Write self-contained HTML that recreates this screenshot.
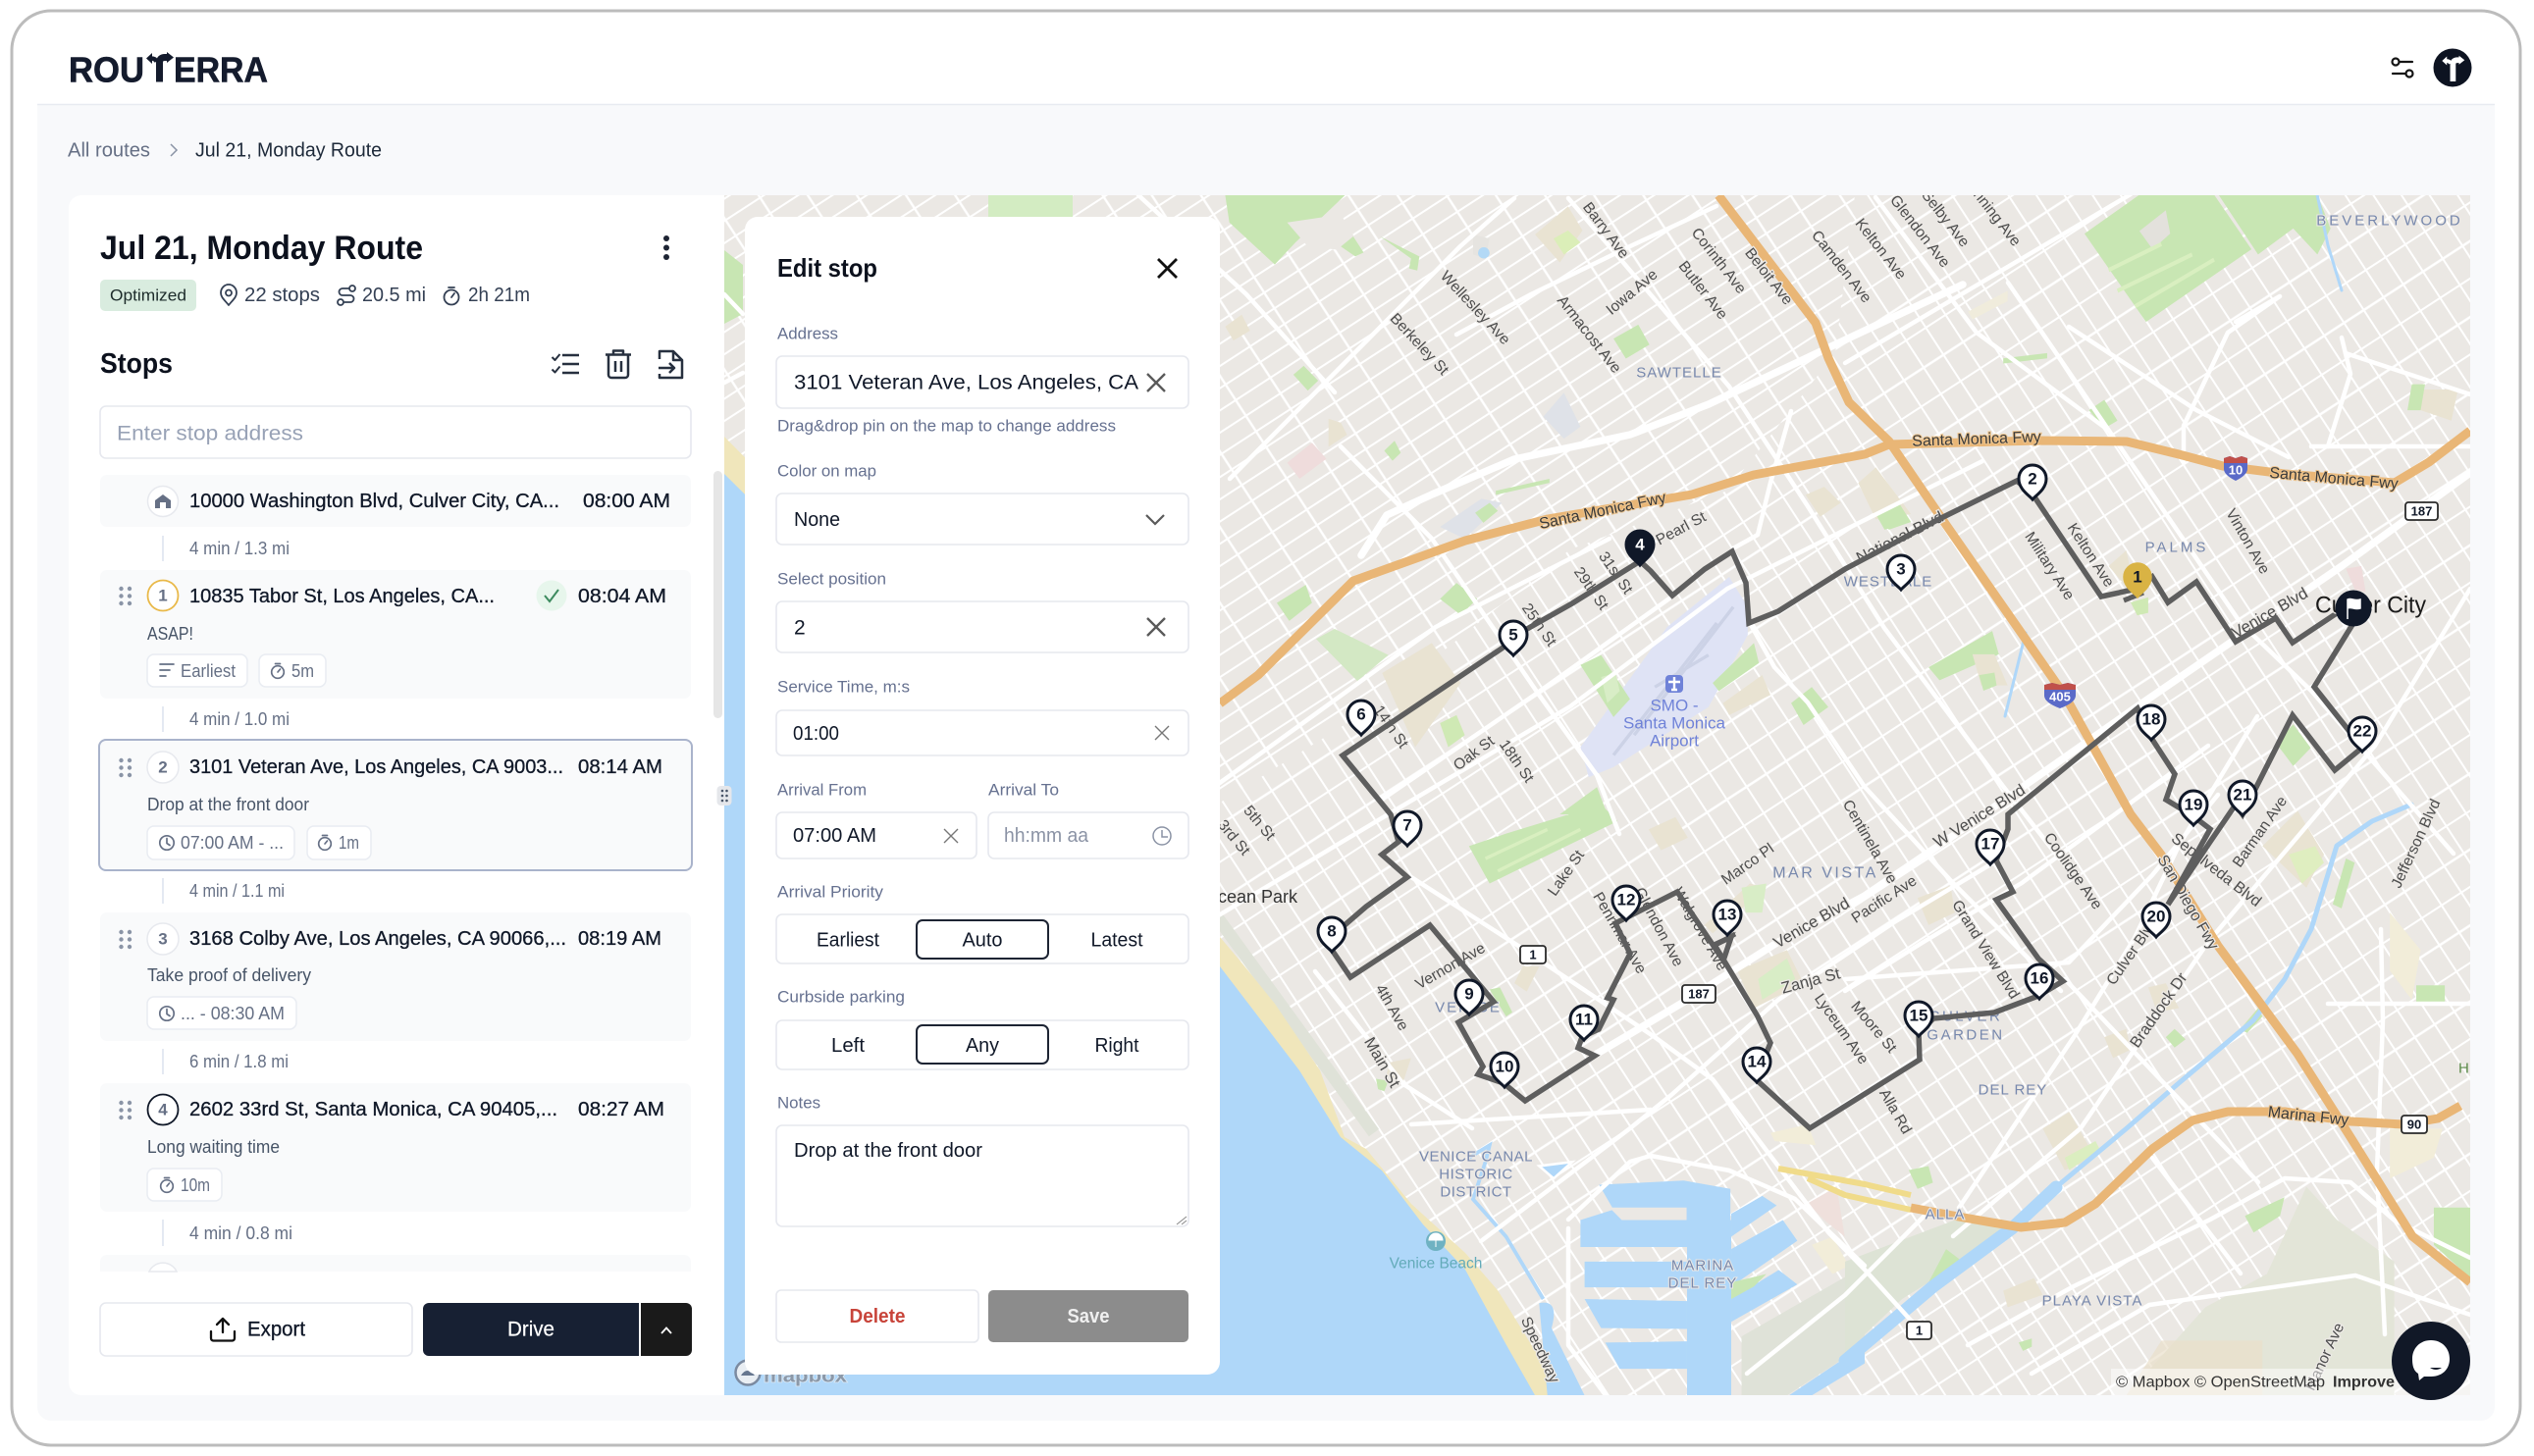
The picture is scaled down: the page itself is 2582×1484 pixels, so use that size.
<!DOCTYPE html>
<html lang="en">
<head>
<meta charset="utf-8">
<title>Routerra - Jul 21, Monday Route</title>
<style>
html,body{margin:0;padding:0;background:#fff;width:2582px;height:1484px;overflow:hidden}
svg{display:block;font-family:"Liberation Sans",sans-serif}
text{dominant-baseline:central}
.t{fill:#101828;font-size:20px;stroke:#101828;stroke-width:.3}
.g{fill:#667085;font-size:18px}
.n{fill:#475467;font-size:18px}
.l{fill:#667190;font-size:17px}
.v{fill:#101828;font-size:20px}
.c{text-anchor:middle}
.s{fill:#4d4d4d;font-size:15.5px;text-anchor:middle;stroke:#ece9e5;stroke-width:2.5px;paint-order:stroke}
.h{fill:#7788ad;font-size:15px;text-anchor:middle;letter-spacing:1px;stroke:#ece9e5;stroke-width:2px;paint-order:stroke}
.f{fill:#3a3a3a;font-size:16px;text-anchor:middle;stroke:#ecc48e;stroke-width:2px;paint-order:stroke}
.a{fill:#6f82d8;font-size:17px;text-anchor:middle}
.pn{font-size:17px;font-weight:bold;text-anchor:middle;fill:#101828}
.sh{fill:#101828;font-size:13px;font-weight:bold;text-anchor:middle}
.i{fill:none;stroke:#344054;stroke-width:1.8;stroke-linecap:round;stroke-linejoin:round}
.i2{fill:none;stroke:#667085;stroke-width:1.7;stroke-linecap:round;stroke-linejoin:round}
.box{fill:#fff;stroke:#e6e8ee;stroke-width:1.6}
.chip{fill:#fff;stroke:#e9ecf2;stroke-width:1.5}
.row{fill:#f9fafb}
.pk{fill:#c8e6b3}
.tn{fill:#e9e3d2}
.rd{fill:none;stroke:#fff;stroke-linecap:round;stroke-linejoin:round}
.fw{fill:none;stroke:#e9b676;stroke-width:9;stroke-linecap:butt;stroke-linejoin:round}
</style>
</head>
<body>
<svg xmlns="http://www.w3.org/2000/svg" width="2582" height="1484" viewBox="0 0 2582 1484">
<defs>
<clipPath id="mc"><rect x="738" y="199" width="1779" height="1223"/></clipPath>
<pattern id="ga" width="126" height="152" patternUnits="userSpaceOnUse" patternTransform="rotate(-33 1000 600)">
<g stroke="#fff" fill="none">
<path d="M0 10H126M0 48H126M0 86H126M0 124H126" stroke-width="2"/>
<path d="M0 29H126M0 67H126M0 105H126M0 143H126" stroke-width="2"/>
<path d="M20 0V152M62 0V152M104 0V152" stroke-width="2.4"/>
</g>
</pattern>
<pattern id="gb" width="96" height="130" patternUnits="userSpaceOnUse" patternTransform="rotate(-33 1000 600)">
<g stroke="#fff" fill="none">
<path d="M8 0V130M32 0V130M56 0V130M80 0V130" stroke-width="2"/>
<path d="M0 24H96M0 89H96" stroke-width="2.4"/>
<path d="M0 56H96M0 121H96" stroke-width="2"/>
</g>
</pattern>
<path id="pin" d="M0,21C-3,17 -14,11 -14,0A14,14 0 1 1 14,0C14,11 3,17 0,21Z"/>
</defs>

<!-- page frame -->
<rect x="12" y="11" width="2556" height="1462" rx="40" fill="#fff" stroke="#bcbcbc" stroke-width="3"/>
<path d="M38 107H2542V1434a14 14 0 0 1-14 14H52a14 14 0 0 1-14-14Z" fill="#f8f9fb"/>
<path d="M38 106.500H2542" stroke="#e8ebf1" stroke-width="1.500"/>

<!-- logo -->
<text x="70" y="71" font-size="36" font-weight="bold" fill="#141b2d" stroke="#141b2d" stroke-width=".6" textLength="77" lengthAdjust="spacingAndGlyphs">ROU</text>
<text x="177" y="71" font-size="36" font-weight="bold" fill="#141b2d" stroke="#141b2d" stroke-width=".6" textLength="96" lengthAdjust="spacingAndGlyphs">ERRA</text>
<g fill="none" stroke="#141b2d">
<path d="M162.500 83.500V64Q162.500 58.500 168 58.500H172" stroke-width="7"/>
<path d="M159.500 63Q158.500 59.500 154 59.500" stroke-width="4.500"/>
</g>
<path d="M170 53L177 58.500L170 64ZM155 54L149 59.500L155 65Z" fill="#141b2d"/>

<!-- header right -->
<g fill="none" stroke="#141414" stroke-width="2.200" stroke-linecap="round">
<circle cx="2441" cy="63" r="3.500"/><path d="M2445 63H2458"/>
<circle cx="2455" cy="75" r="3.500"/><path d="M2438 75H2451"/>
</g>
<circle cx="2499" cy="69" r="19.500" fill="#0d1321"/>
<g transform="translate(2499 69) scale(.82) translate(-162 -68)">
<g fill="none" stroke="#fff">
<path d="M162.500 85V64Q162.500 58.500 168 58.500H172" stroke-width="7"/>
<path d="M159.500 63Q158.500 59.500 154 59.500" stroke-width="4.500"/>
</g>
<path d="M170 53L177 58.500L170 64ZM155 54L149 59.500L155 65Z" fill="#fff"/>
</g>

<!-- breadcrumb -->
<text x="69" y="153.500" font-size="20" fill="#667085" textLength="84" lengthAdjust="spacingAndGlyphs">All routes</text>
<path d="M174 147L180 153L174 159" fill="none" stroke="#8a93a5" stroke-width="1.500"/>
<text x="199" y="153.500" font-size="20" fill="#1d2939" textLength="190" lengthAdjust="spacingAndGlyphs">Jul 21, Monday Route</text>

<!-- left panel -->
<rect x="70" y="199" width="700" height="1223" rx="13" fill="#fff"/>
<text x="102" y="253" font-size="34" font-weight="bold" fill="#0c111d" textLength="329" lengthAdjust="spacingAndGlyphs">Jul 21, Monday Route</text>
<g fill="#1d2433"><circle cx="679" cy="243" r="3"/><circle cx="679" cy="252.500" r="3"/><circle cx="679" cy="262" r="3"/></g>

<rect x="102" y="285" width="98" height="32" rx="5" fill="#d9ecdf"/>
<text x="112" y="301" font-size="17" fill="#1c2b2a" textLength="78" lengthAdjust="spacingAndGlyphs">Optimized</text>
<path class="i" d="M233 311C229 306 225 303 225 298.500A8 8.500 0 0 1 241 298.500C241 303 237 306 233 311Z"/><circle class="i" cx="233" cy="298.500" r="3"/>
<text x="249" y="301" font-size="20" fill="#344054" textLength="77" lengthAdjust="spacingAndGlyphs">22 stops</text>
<g class="i"><circle cx="359" cy="294" r="3"/><circle cx="347" cy="308" r="3"/><path d="M355.500 294H349a3.500 3.500 0 0 0 0 7H357a3.500 3.500 0 0 1 0 7H351"/></g>
<text x="369" y="301" font-size="20" fill="#344054" textLength="65" lengthAdjust="spacingAndGlyphs">20.5 mi</text>
<g class="i"><circle cx="460" cy="303" r="7.500"/><path d="M457 293H463M460 303L463 299"/></g>
<text x="477" y="301" font-size="20" fill="#344054" textLength="63" lengthAdjust="spacingAndGlyphs">2h 21m</text>

<text x="102" y="371" font-size="29" font-weight="bold" fill="#0c111d" textLength="74" lengthAdjust="spacingAndGlyphs">Stops</text>
<g fill="none" stroke="#27303f" stroke-width="2.500" stroke-linejoin="round">
<path d="M573 362H590M573 371H590M573 380H590"/>
<path d="M562.500 364L565.500 367L570.500 361M562.500 376.500L565.500 379.500L570.500 373.500" stroke-width="2"/>
<path d="M617 361.500H643M625 361V357.500H635V361M620 362V382a3 3 0 0 0 3 3H637a3 3 0 0 0 3-3V362M627 368V379M633 368V379"/>
<path d="M672 366V358H686L695 367V385H672V381M686 358V367H695M671 375H686M682 370L687 375L682 380"/>
</g>

<rect class="box" x="102" y="414" width="602" height="53" rx="6"/>
<text x="119" y="442" font-size="21" fill="#98a2b6" textLength="190" lengthAdjust="spacingAndGlyphs">Enter stop address</text>

<!-- scrollbar -->
<rect x="727" y="480" width="9" height="252" rx="4.500" fill="#e6e6e6"/>

<!-- home row -->
<rect class="row" x="102" y="484" width="602" height="53" rx="7"/>
<ellipse cx="166" cy="511" rx="15.500" ry="15.500" fill="#fff" stroke="#e7e9ee" stroke-width="1.500"/>
<path d="M166 504L174 510V518H169V512H163V518H158V510Z" fill="#667085"/>
<text class="t" x="193" y="511" textLength="377" lengthAdjust="spacingAndGlyphs">10000 Washington Blvd, Culver City, CA...</text>
<text class="t" x="594" y="511" textLength="89" lengthAdjust="spacingAndGlyphs">08:00 AM</text>

<path d="M166 546V572M166 720V746M166 895V921M166 1069V1095M166 1243V1270" stroke="#e4e9f2" stroke-width="2"/>
<text class="g" x="193" y="559" textLength="102" lengthAdjust="spacingAndGlyphs">4 min / 1.3 mi</text>
<text class="g" x="193" y="733" textLength="102" lengthAdjust="spacingAndGlyphs">4 min / 1.0 mi</text>
<text class="g" x="193" y="908" textLength="97" lengthAdjust="spacingAndGlyphs">4 min / 1.1 mi</text>
<text class="g" x="193" y="1082" textLength="101" lengthAdjust="spacingAndGlyphs">6 min / 1.8 mi</text>
<text class="g" x="193" y="1257" textLength="105" lengthAdjust="spacingAndGlyphs">4 min / 0.8 mi</text>

<!-- row 1 -->
<rect class="row" x="102" y="581" width="602" height="131" rx="7"/>
<g fill="#8a94a6"><circle cx="123.500" cy="600" r="2.200"/><circle cx="132" cy="600" r="2.200"/><circle cx="123.500" cy="607.500" r="2.200"/><circle cx="132" cy="607.500" r="2.200"/><circle cx="123.500" cy="615" r="2.200"/><circle cx="132" cy="615" r="2.200"/></g>
<circle cx="166" cy="607" r="15.500" fill="#fff" stroke="#e9b949" stroke-width="1.800"/>
<text x="166" y="607" font-size="17" font-weight="bold" fill="#667085" text-anchor="middle">1</text>
<text class="t" x="193" y="608" textLength="311" lengthAdjust="spacingAndGlyphs">10835 Tabor St, Los Angeles, CA...</text>
<circle cx="562" cy="607" r="15.500" fill="#e7f6ec"/>
<path d="M555 607L560 613L569 601" fill="none" stroke="#3d8b5f" stroke-width="2"/>
<text class="t" x="589" y="608" textLength="90" lengthAdjust="spacingAndGlyphs">08:04 AM</text>
<text class="n" x="150" y="646" textLength="47" lengthAdjust="spacingAndGlyphs">ASAP!</text>
<rect class="chip" x="150" y="667" width="102" height="33" rx="7"/>
<path class="i2" d="M163 677H177M163 683H173M163 689H169"/>
<text class="g" x="184" y="684" textLength="56" lengthAdjust="spacingAndGlyphs">Earliest</text>
<rect class="chip" x="264" y="667" width="68" height="33" rx="7"/>
<g class="i2"><circle cx="283" cy="685" r="6.300"/><path d="M280.500 676.500H285.500M283 685L285.500 682"/></g>
<text class="g" x="297" y="684" textLength="23" lengthAdjust="spacingAndGlyphs">5m</text>

<!-- row 2 selected -->
<rect x="101" y="754" width="604" height="133" rx="7" fill="#f9fafb" stroke="#a9b3cb" stroke-width="2"/>
<g fill="#8a94a6"><circle cx="123.500" cy="775" r="2.200"/><circle cx="132" cy="775" r="2.200"/><circle cx="123.500" cy="782.500" r="2.200"/><circle cx="132" cy="782.500" r="2.200"/><circle cx="123.500" cy="790" r="2.200"/><circle cx="132" cy="790" r="2.200"/></g>
<circle cx="166" cy="782" r="16" fill="#fff" stroke="#e7e9ee" stroke-width="1.500"/>
<text x="166" y="782" font-size="17" font-weight="bold" fill="#667085" text-anchor="middle">2</text>
<text class="t" x="193" y="782" textLength="381" lengthAdjust="spacingAndGlyphs">3101 Veteran Ave, Los Angeles, CA 9003...</text>
<text class="t" x="589" y="782" textLength="86" lengthAdjust="spacingAndGlyphs">08:14 AM</text>
<text class="n" x="150" y="820" textLength="165" lengthAdjust="spacingAndGlyphs">Drop at the front door</text>
<rect class="chip" x="150" y="842" width="150" height="34" rx="7"/>
<g class="i2"><circle cx="170" cy="859" r="7.200"/><path d="M170 854.500V859.500L173 861.500"/></g>
<text class="g" x="184" y="859" textLength="105" lengthAdjust="spacingAndGlyphs">07:00 AM - ...</text>
<rect class="chip" x="313" y="842" width="65" height="34" rx="7"/>
<g class="i2"><circle cx="331" cy="860" r="6.300"/><path d="M328.500 851.500H333.500M331 860L333.500 857"/></g>
<text class="g" x="345" y="859" textLength="21" lengthAdjust="spacingAndGlyphs">1m</text>

<!-- row 3 -->
<rect class="row" x="102" y="930" width="602" height="131" rx="7"/>
<g fill="#8a94a6"><circle cx="123.500" cy="950" r="2.200"/><circle cx="132" cy="950" r="2.200"/><circle cx="123.500" cy="957.500" r="2.200"/><circle cx="132" cy="957.500" r="2.200"/><circle cx="123.500" cy="965" r="2.200"/><circle cx="132" cy="965" r="2.200"/></g>
<circle cx="166" cy="957" r="16" fill="#fff" stroke="#e7e9ee" stroke-width="1.500"/>
<text x="166" y="957" font-size="17" font-weight="bold" fill="#667085" text-anchor="middle">3</text>
<text class="t" x="193" y="957" textLength="384" lengthAdjust="spacingAndGlyphs">3168 Colby Ave, Los Angeles, CA 90066,...</text>
<text class="t" x="589" y="957" textLength="85" lengthAdjust="spacingAndGlyphs">08:19 AM</text>
<text class="n" x="150" y="994" textLength="167" lengthAdjust="spacingAndGlyphs">Take proof of delivery</text>
<rect class="chip" x="150" y="1016" width="152" height="33" rx="7"/>
<g class="i2"><circle cx="170" cy="1033" r="7.200"/><path d="M170 1028.500V1033.500L173 1035.500"/></g>
<text class="g" x="184" y="1033" textLength="106" lengthAdjust="spacingAndGlyphs">... - 08:30 AM</text>

<!-- row 4 -->
<rect class="row" x="102" y="1104" width="602" height="131" rx="7"/>
<g fill="#8a94a6"><circle cx="123.500" cy="1124" r="2.200"/><circle cx="132" cy="1124" r="2.200"/><circle cx="123.500" cy="1131.500" r="2.200"/><circle cx="132" cy="1131.500" r="2.200"/><circle cx="123.500" cy="1139" r="2.200"/><circle cx="132" cy="1139" r="2.200"/></g>
<circle cx="166" cy="1131" r="15.500" fill="#fff" stroke="#101828" stroke-width="1.800"/>
<text x="166" y="1131" font-size="17" font-weight="bold" fill="#667085" text-anchor="middle">4</text>
<text class="t" x="193" y="1131" textLength="375" lengthAdjust="spacingAndGlyphs">2602 33rd St, Santa Monica, CA 90405,...</text>
<text class="t" x="589" y="1131" textLength="88" lengthAdjust="spacingAndGlyphs">08:27 AM</text>
<text class="n" x="150" y="1169" textLength="135" lengthAdjust="spacingAndGlyphs">Long waiting time</text>
<rect class="chip" x="150" y="1191" width="76" height="33" rx="7"/>
<g class="i2"><circle cx="170" cy="1209" r="6.300"/><path d="M167.500 1200.500H172.500M170 1209L172.500 1206"/></g>
<text class="g" x="184" y="1208" textLength="30" lengthAdjust="spacingAndGlyphs">10m</text>

<!-- row 5 clipped -->
<path class="row" d="M102 1296V1286a7 7 0 0 1 7-7H697a7 7 0 0 1 7 7V1296Z"/>
<path d="M152 1296A15.500 15.500 0 0 1 180 1296Z" fill="#fff" stroke="#e7e9ee" stroke-width="1.500"/>

<!-- bottom buttons -->
<rect class="box" x="102" y="1328" width="318" height="54" rx="6"/>
<path d="M215 1357V1364a2.500 2.500 0 0 0 2.500 2.500H236.500a2.500 2.500 0 0 0 2.500-2.500V1357M227 1358V1344.500M221 1350L227 1344L233 1350" fill="none" stroke="#111" stroke-width="2.300" stroke-linecap="round" stroke-linejoin="round"/>
<text x="252" y="1355" font-size="21" fill="#101828" stroke="#101828" stroke-width=".3" textLength="59" lengthAdjust="spacingAndGlyphs">Export</text>
<path d="M437 1328H651V1382H437a6 6 0 0 1-6-6V1334a6 6 0 0 1 6-6Z" fill="#172033"/>
<path d="M653 1328H699a6 6 0 0 1 6 6V1376a6 6 0 0 1-6 6H653Z" fill="#1a1a1a"/>
<text x="517" y="1355" font-size="21" fill="#fff" stroke="#fff" stroke-width=".2" textLength="48" lengthAdjust="spacingAndGlyphs">Drive</text>
<path d="M674 1359L679 1353.500L684 1359" fill="none" stroke="#fff" stroke-width="1.800"/>

<!-- MAP -->
<g clip-path="url(#mc)">
<rect x="738" y="199" width="1779" height="1223" fill="#ebe8e4"/>
<rect x="738" y="199" width="1779" height="1223" fill="url(#gb)"/>
<path d="M738 199H1890L1870 360L1760 500L1600 560L1400 720L1240 820H738Z" fill="#ebe8e4"/>
<path d="M738 199H1890L1870 360L1760 500L1600 560L1400 720L1240 820H738Z" fill="url(#ga)"/>

<!-- zoom6 quadrant fills -->
<g transform="translate(1240 190) scale(.4209 .4082)">
<polygon class="pk" points="20,22 310,22 190,140 140,195 30,90"/>
<polygon points="170,90 300,70 355,165 220,150" fill="#ebe8e4"/>
<polygon class="pk" points="300,150 330,125 355,165 335,175"/>
<polygon class="pk" points="395,125 490,175 485,210 465,205 470,180"/>
<polygon class="pk" points="960,380 1020,345 1047,395 990,430"/>
<polygon class="pk" points="185,470 210,448 245,485 220,510"/>
<polygon class="pk" points="405,660 430,635 445,665 425,685"/>
<polygon class="pk" points="145,1040 215,995 230,1040 175,1085"/>
<polygon points="240,1130 285,1105 415,1170 340,1235" fill="#d3e8c4"/>
<polygon class="pk" points="540,1030 580,990 630,1030 590,1070"/>
<polygon class="tn" points="770,120 850,50 885,110 830,190"/>
<polygon points="815,130 850,110 880,140 840,170" fill="#dbeeb8"/>
<polygon class="tn" points="400,1215 520,1140 590,1240 480,1400"/>
<polygon points="540,1340 580,1320 600,1370 560,1400" fill="#cfe9b4"/>
<polygon points="790,575 840,515 880,600 840,630" fill="#dfe2e8"/>
<polygon points="540,850 640,780 690,790 600,880" fill="#dfe2e8"/>
<polygon points="170,690 230,640 265,680 200,730" fill="#efdcdc"/>
<polygon points="20,350 60,320 80,360 40,385" fill="#e9e3d2"/>
<polygon points="270,580 300,590 315,620 270,650" fill="#e9e3d2"/>
<polygon points="620,120 660,130 650,180 620,170" fill="#e6e4e0"/>
<ellipse cx="646" cy="166" rx="14" ry="14" fill="#b3d9f6"/>
<!-- airport -->
<polygon points="880,1400 1090,1100 1240,975 1285,1050 1285,1120 1190,1300 960,1450 900,1475" fill="#dfe3f5"/>
<path d="M960 1420L1210 1090M1010 1370L1250 1050M1060 1250L1190 1170" stroke="#ccd2e6" stroke-width="8" fill="none"/>
<polygon class="pk" points="880,1195 930,1170 1000,1280 960,1325"/>
<polygon points="930,1225 965,1215 975,1260 945,1290" fill="#d8edc6"/>
<polygon class="pk" points="1200,1240 1300,1140 1312,1190 1215,1260"/>
<polygon class="tn" points="1225,1290 1320,1220 1340,1270 1240,1320"/>
<polygon class="pk" points="1390,1290 1440,1250 1480,1300 1420,1345"/>
<polygon class="pk" points="830,1568 920,1500 945,1568"/>
<polygon class="tn" points="1425,770 1470,750 1510,790 1460,825"/>
<polygon class="pk" points="675,760 805,730 805,740 675,770"/>
<polygon class="pk" points="625,815 660,790 680,810 645,840"/>
</g>

<!-- zoom7 quadrant fills -->
<g transform="translate(1880 0) scale(.4477 .5293)">
<polygon class="pk" points="545,450 670,375 840,375 925,480 685,620"/>
<polygon class="pk" points="850,375 1075,375 1105,440 1075,490 1020,440 940,490"/>
<polygon points="670,445 730,405 740,450 700,480" fill="#e3e1dc"/>
<path d="M600 520L720 470M620 560L790 490M660 590L840 500" stroke="#d9efc0" stroke-width="8" fill="none"/>
<polygon class="pk" points="70,995 110,960 150,1005 100,1020"/>
<polygon class="tn" points="30,930 70,900 150,990 70,1000"/>
<polygon class="pk" points="70,990 120,965 150,1005 90,1020"/>
<polygon class="pk" points="190,1285 335,1215 350,1260 215,1310"/>
<polygon class="pk" points="555,790 590,770 620,810 590,825"/>
<polygon points="650,1160 690,1150 690,1180 665,1185" fill="#cfe9b4"/>
<polygon class="pk" points="980,1430 1020,1395 1060,1440 1020,1475"/>
<polygon class="tn" points="1310,750 1395,750 1380,810 1310,790"/>
<polygon class="pk" points="1290,740 1320,740 1310,790 1280,790"/>
<polygon class="tn" points="600,1090 640,1060 650,1100 640,1130"/>
<polygon class="tn" points="290,1260 340,1260 370,1320 310,1320"/>
<polygon class="pk" points="305,1300 340,1295 345,1320 315,1330"/>
<polygon points="1140,1095 1175,1090 1185,1140 1160,1135" fill="#efdcdc"/>
<polygon class="pk" points="360,690 460,680 460,690 360,700"/>
<polygon points="280,600 370,560 370,580 290,615" fill="#f0ecdc"/>
</g>

<!-- zoom8 quadrant fills -->
<g transform="translate(1240 820) scale(.4209 .4235)">
<polygon class="pk" points="610,100 700,70 930,0 970,40 660,190"/>
<path d="M650 130L800 60M680 160L880 60" stroke="#d9efc0" stroke-width="8" fill="none"/>
<polygon class="tn" points="740,390 780,390 750,450 720,430"/>
<polygon class="pk" points="660,445 685,440 715,500 700,510"/>
<polygon class="tn" points="1200,310 1330,200 1290,190 1180,290"/>
<polygon points="1270,200 1330,190 1320,260 1280,260" fill="#d8edc6"/>
<polygon class="tn" points="1260,400 1380,350 1420,430 1300,490"/>
<polygon points="1310,420 1380,370 1400,420 1320,470" fill="#d8edc6"/>
<polygon class="tn" points="1045,60 1110,30 1140,80 1075,110"/>
<polygon class="tn" points="420,620 470,610 450,670 410,650"/>
<polygon class="pk" points="385,660 415,665 405,690 390,685"/>
<polygon points="1270,1280 1568,1110 1568,1300 1380,1422 1270,1422" fill="#dfe2d8"/>
<polygon points="1430,960 1500,920 1520,1040 1470,1000" fill="#efe0dc"/>
<polygon points="1440,1060 1490,1040 1530,1110 1490,1130" fill="#f2edd9"/>
<polygon points="1340,790 1430,770 1450,820 1350,810" fill="#f2edd9"/>
<path d="M0 270L380 790" stroke="#dfe2d8" stroke-width="30" fill="none"/>
</g>

<!-- zoom9 quadrant fills -->
<g transform="translate(1880 820) scale(.4477 .4235)">
<polygon points="640,1422 820,1210 960,1130 1050,920 1120,1000 1250,1100 1250,1422" fill="#e3e5d8"/>
<polygon points="0,1100 250,1000 400,1010 130,1190 0,1320" fill="#dde3d5"/>
<polygon class="tn" points="950,100 1030,15 1090,120 1050,200"/>
<polygon points="1010,120 1070,100 1090,140 1040,190" fill="#dfeec0"/>
<polygon class="tn" points="165,225 240,195 250,260 190,290"/>
<polygon class="tn" points="450,780 510,740 570,850 500,880"/>
<polygon points="500,850 570,810 580,830 510,880" fill="#dbeec0"/>
<polygon points="1240,780 1360,780 1340,850 1240,900" fill="#f2edd9"/>
<polygon points="1240,260 1310,350 1290,470 1240,400" fill="#f2edd9"/>
<polygon class="tn" points="360,1170 430,1140 450,1180 370,1210"/>
<polygon class="tn" points="590,560 640,540 650,590 610,610"/>
<polygon class="tn" points="690,440 730,430 760,490 710,500"/>
<polygon class="pk" points="1300,435 1365,435 1365,475 1300,475"/>
<polygon class="pk" points="1110,240 1140,130 1160,140 1130,250"/>
<polygon class="pk" points="900,540 940,490 950,510 915,550"/>
<polygon class="pk" points="145,880 190,870 200,910 165,925"/>
<polygon class="pk" points="180,1170 230,1070 280,1110 190,1180"/>
<polygon class="pk" points="910,990 1000,945 990,990 930,1030"/>
<polygon class="pk" points="1340,970 1424,970 1424,1140 1340,1060"/>
<polygon class="pk" points="730,560 750,540 775,565 750,585"/>
<polygon class="pk" points="395,1295 425,1285 425,1305 405,1315"/>
<polygon points="720,1290 950,1290 950,1422 640,1422" fill="#e9dfca" opacity=".7"/>
</g>

<!-- left strip hill -->
<polygon points="738,255 757,270 757,320 738,330" fill="#c8e6b3"/>
<polygon points="1007,199 1093,199 1093,221 1007,221" fill="#d3ecc2"/>

<!-- beach + ocean -->
<polygon points="738,445 1243,955 1265,981 1299,1023 1345,1091 1370,1159 1392,1171 1438,1227 1493,1277 1526,1315 1568,1383 1594,1422 738,1422" fill="#f0e6bb"/>
<polygon points="738,483 1243,985 1282,1036 1324,1091 1366,1159 1408,1193 1450,1248 1493,1294 1535,1371 1564,1422 738,1422" fill="#afd7f9"/>

<!-- marina -->
<g transform="translate(1240 820) scale(.4209 .4235)" fill="#afd7f9">
<polygon points="925,915 1130,905 1243,925 1243,1065 880,1065 880,1000 960,975"/>
<polygon points="950,970 1137,970 1137,1000 980,1000" fill="#ebe8e4"/>
<rect x="890" y="1100" width="248" height="62"/>
<polygon points="890,1190 1138,1195 1138,1262 930,1260"/>
<polygon points="940,1295 1138,1292 1138,1358 975,1358"/>
<rect x="1138" y="1000" width="107" height="422"/>
<polygon points="1245,985 1320,942 1355,965 1245,1040"/>
<polygon points="1245,1070 1370,1000 1405,1050 1245,1160"/>
<polygon points="1245,1190 1360,1120 1405,1155 1245,1245"/>
<polygon points="1245,1150 1330,1130 1300,1160 1245,1190" fill="#c8e6b3"/>
<path d="M780 870L860 860L815 900Z" fill="#afd7f9" stroke="#fff" stroke-width="6"/>
<path d="M780 1200Q830 1190 810 1260L890 1422H800Z"/>
<path d="M1385 1422L1568 1300V1345L1440 1422Z"/>
<path d="M610 850L660 820L650 860L620 950L700 1040L790 1190" fill="none" stroke="#afd7f9" stroke-width="9"/>
</g>

<!-- creek -->
<g fill="none" stroke="#afd7f9" stroke-linejoin="round" stroke-linecap="round">
<path d="M1880 1387L1970 1311L2050 1252L2095 1210" stroke-width="13"/>
<path d="M2095 1210L2167 1150L2220 1104L2296 1040L2328 998L2355 947L2381 862L2417 837L2457 820" stroke-width="5"/>
<path d="M2361 198L2372 250L2386 296" stroke-width="3"/>
<path d="M2064 645L2043 730" stroke-width="3"/>
</g>

<!-- major roads -->
<g class="rd" stroke-width="4.500">
<path d="M1253 488L1488 251L1543 202"/>
<path d="M1484 341L1560 300L1661 251L1749 210"/>
<path d="M1825 419L1804 492L1791 545L1766 559"/>
<path d="M1701 610L1606 678L1564 708L1408 815"/>
<path d="M1783 635L1808 680L1842 716L1900 802L1990 900L2100 1010"/>
<path d="M1640 549L1463 639L1333 733L1240 800"/>
<path d="M1366 455L1459 549L1568 708L1627 790L1650 850"/>
<path d="M1598 202L1762 394L1842 516L1920 640L2040 800L2110 890"/>
<path d="M1438 894L1547 964L1686 1057L1745 1100L1863 1256L1900 1294L1960 1360"/>
<path d="M1240 934L1396 841L1600 720L1760 600L1900 530L2020 470"/>
<path d="M1598 1243L1661 1184L1682 1178L1762 1193L1829 1222L1900 1290"/>
<path d="M1509 1265L1661 1150L1703 1116L1812 1019L1930 940L2030 880"/>
<path d="M1438 1146L1682 1131M1500 1150L1430 1105L1340 990"/>
<path d="M1598 1252L1598 1371L1636 1422"/>
<path d="M1880 998L2108 981L2193 892L2260 810"/>
<path d="M1996 1231L2113 1057L2175 956L2220 862L2300 730"/>
<path d="M2005 1371L2113 1311L2252 1243L2328 1201L2395 1205L2440 1244L2517 1282"/>
<path d="M2193 1180L2283 1298"/>
<path d="M2426 947L2428 1040L2422 1193L2430 1360"/>
<path d="M2372 1023L2517 1023"/>
<path d="M2104 998L2301 1205"/>
<path d="M1880 370L2171 198"/>
<path d="M2108 333L2238 418L2332 466"/>
<path d="M1911 201L2014 339L2149 439"/>
<path d="M2046 288L2149 439L2283 635L2355 704L2500 870"/>
<path d="M2278 328L2323 302L2270 339L2225 434L2225 471"/>
<path d="M2386 344L2395 381L2372 455"/>
<path d="M2390 360L2517 402"/>
<path d="M2355 455L2517 455"/>
<path d="M2070 1400L2190 1330L2400 1300L2517 1340"/>
<path d="M2250 760L2060 900L1960 960L1880 1010"/>
<path d="M2517 600L2420 760L2250 960L2120 1150L1990 1260"/>
<path d="M1960 1240L1880 1320L1780 1400"/>
<path d="M1160 199L1270 300L1360 400"/>
<path d="M738 300L757 320M738 390L757 380"/>
</g>
<g class="rd" stroke-width="7.500">
<path d="M1387 566L1413 525L1459 504L1543 468L1661 443L1741 412L1900 337L2000 290"/>
<path d="M1627 1074L1716 1021L1812 960L1900 913L1987 854L2175 722L2386 577L2517 482"/>
</g>

<!-- freeways -->
<path d="M1812 1191L1900 1207L1947 1218M1842 1201L1880 1218L1947 1233" fill="none" stroke="#f0db8a" stroke-width="6"/>
<path class="fw" d="M1751 199L1850 329L1863 365L1884 410L1925 450L1983 535L2104 709L2171 830L2202 871L2260 964L2341 1074L2395 1159L2458 1260L2517 1307" stroke-width="10"/>
<path class="fw" d="M1243 717L1282 688L1379 592L1493 551L1577 529L1724 504L1787 484L1900 463L1925 453L2077 449L2167 450L2220 463L2265 475L2328 483L2440 492L2475 471L2517 439"/>
<path class="fw" d="M1947 1231L2001 1241L2059 1251L2104 1246L2135 1227L2193 1171L2234 1142L2270 1133L2328 1133L2395 1143L2449 1146L2484 1140L2507 1127" stroke-width="9.500"/>

<!-- street labels -->
<text class="s" transform="translate(1636 235) rotate(53)">Barry Ave</text>
<text class="s" transform="translate(1503 314) rotate(47)">Wellesley Ave</text>
<text class="s" transform="translate(1446 351) rotate(47)">Berkeley St</text>
<text class="s" transform="translate(1619 341) rotate(52)">Armacost Ave</text>
<text class="s" transform="translate(1663 298) rotate(-40)">Iowa Ave</text>
<text class="s" transform="translate(1735 296) rotate(52)">Butler Ave</text>
<text class="s" transform="translate(1751 266) rotate(52)">Corinth Ave</text>
<text class="s" transform="translate(1802 282) rotate(52)">Beloit Ave</text>
<text class="s" transform="translate(1876 272) rotate(52)">Camden Ave</text>
<text class="s" transform="translate(1916 254) rotate(52)">Kelton Ave</text>
<text class="s" transform="translate(1956 236) rotate(52)">Glendon Ave</text>
<text class="s" transform="translate(1982 223) rotate(52)">Selby Ave</text>
<text class="s" transform="translate(2028 214) rotate(52)">Manning Ave</text>
<text class="s" transform="translate(1713 539) rotate(-28)">Pearl St</text>
<text class="s" transform="translate(1646 584) rotate(55)">31st St</text>
<text class="s" transform="translate(1621 600) rotate(55)">29th St</text>
<text class="s" transform="translate(1568 637) rotate(55)">25th St</text>
<text class="s" transform="translate(1417 741) rotate(55)">14th St</text>
<text class="s" transform="translate(1502 768) rotate(-37)">Oak St</text>
<text class="s" transform="translate(1545 776) rotate(55)">18th St</text>
<text class="s" transform="translate(1283 839) rotate(50)">5th St</text>
<text class="s" transform="translate(1257 854) rotate(50)">3rd St</text>
<text class="s" transform="translate(1596 890) rotate(-55)">Lake St</text>
<text class="s" transform="translate(1781 881) rotate(-35)">Marco Pl</text>
<text class="s" style="font-size:16.500px" transform="translate(1846 941) rotate(-30)">Venice Blvd</text>
<text class="s" transform="translate(1732 947) rotate(60)">Walgrove Ave</text>
<text class="s" transform="translate(1650 951) rotate(60)">Pennmar Ave</text>
<text class="s" transform="translate(1690 945) rotate(62)">Glendon Ave</text>
<text class="s" transform="translate(1478 985) rotate(-30)">Vernon Ave</text>
<text class="s" transform="translate(1418 1027) rotate(60)">4th Ave</text>
<text class="s" style="font-size:16.500px" transform="translate(1408 1083) rotate(60)">Main St</text>
<text class="s" style="font-size:16.500px" transform="translate(1845 1000) rotate(-15)">Zanja St</text>
<text class="s" transform="translate(1876 1049) rotate(55)">Lyceum Ave</text>
<text class="s" transform="translate(1909 1047) rotate(50)">Moore St</text>
<text class="s" transform="translate(1569 1376) rotate(65)">Speedway</text>
<text class="s" transform="translate(1905 858) rotate(60)">Centinela Ave</text>
<text class="s" style="font-size:16.500px" transform="translate(2017 832) rotate(-32)">W Venice Blvd</text>
<text class="s" transform="translate(1920 917) rotate(-33)">Pacific Ave</text>
<text class="s" transform="translate(2112 888) rotate(55)">Coolidge Ave</text>
<text class="s" transform="translate(2023 968) rotate(58)">Grand View Blvd</text>
<text class="s" transform="translate(2173 970) rotate(-55)">Culver Blvd</text>
<text class="s" transform="translate(1931 1133) rotate(60)">Alla Rd</text>
<text class="s" style="font-size:16px" transform="translate(2258 887) rotate(38)">Sepulveda Blvd</text>
<text class="s" style="font-size:16px" transform="translate(2229 920) rotate(60)">San Diego Fwy</text>
<text class="s" transform="translate(2303 848) rotate(-55)">Barman Ave</text>
<text class="s" transform="translate(2462 860) rotate(-65)">Jefferson Blvd</text>
<text class="s" style="font-size:16px" transform="translate(2200 1030) rotate(-55)">Braddock Dr</text>
<text class="s" transform="translate(2369 1383) rotate(-65)">Manor Ave</text>
<text class="s" transform="translate(2088 577) rotate(57)">Military Ave</text>
<text class="s" transform="translate(2130 566) rotate(57)">Kelton Ave</text>
<text class="s" transform="translate(2290 552) rotate(60)">Vinton Ave</text>
<text class="s" style="font-size:16.500px" transform="translate(1936 548) rotate(-27)">National Blvd</text>
<text class="s" style="font-size:16.500px" transform="translate(2313 625) rotate(-30)">Venice Blvd</text>

<text class="f" transform="translate(1633 521) rotate(-12)">Santa Monica Fwy</text>
<text class="f" transform="translate(2014 448) rotate(-2)">Santa Monica Fwy</text>
<text class="f" transform="translate(2378 488) rotate(5)">Santa Monica Fwy</text>
<text class="f" transform="translate(2352 1138) rotate(6)">Marina Fwy</text>

<text class="h" x="1711" y="380">SAWTELLE</text>
<text class="h" x="2435" y="225" style="letter-spacing:3px">BEVERLYWOOD</text>
<text class="h" x="2218" y="558" style="letter-spacing:3px">PALMS</text>
<text class="h" x="1924" y="593">WESTDALE</text>
<text class="h" x="1860" y="890" style="letter-spacing:2.500px;font-size:16px">MAR VISTA</text>
<text class="h" x="1496" y="1027" style="letter-spacing:2px">VENICE</text>
<text class="h" x="1504" y="1179" style="letter-spacing:.5px">VENICE CANAL</text>
<text class="h" x="1504" y="1197" style="letter-spacing:.5px">HISTORIC</text>
<text class="h" x="1504" y="1215" style="letter-spacing:.5px">DISTRICT</text>
<text class="h" x="1735" y="1290">MARINA</text>
<text class="h" x="1735" y="1308">DEL REY</text>
<text class="h" x="2003" y="1036" style="letter-spacing:2.500px">CULVER</text>
<text class="h" x="2003" y="1055" style="letter-spacing:2.500px">GARDEN</text>
<text class="h" x="2051" y="1111">DEL REY</text>
<text class="h" x="1982" y="1238">ALLA</text>
<text class="h" x="2132" y="1326">PLAYA VISTA</text>
<text x="2505" y="1089" font-size="15" fill="#5b8a48">H</text>

<!-- airport marker -->
<rect x="1697" y="688" width="18" height="18" rx="4" fill="#6f82d8"/>
<path d="M1706 690V704M1700 695H1712M1703 703H1709" stroke="#fff" stroke-width="2.400"/>
<text class="a" x="1706" y="719">SMO -</text>
<text class="a" x="1706" y="737">Santa Monica</text>
<text class="a" x="1706" y="755">Airport</text>

<!-- beach marker -->
<circle cx="1463" cy="1265" r="10" fill="#6fb2c2"/>
<path d="M1456 1264A7 7 0 0 1 1470 1264ZM1463 1264V1271" fill="#fff" stroke="#fff" stroke-width="1"/>
<text x="1463" y="1288" font-size="15.500" fill="#63abb9" text-anchor="middle">Venice Beach</text>

<text x="1322" y="914" font-size="18" fill="#333" text-anchor="end">Ocean Park</text>

<!-- shields -->
<g fill="#fff" stroke="#2a2a2a" stroke-width="1.800">
<rect x="1549" y="964" width="26" height="18" rx="3"/>
<rect x="1714" y="1004" width="34" height="18" rx="3"/>
<rect x="1943" y="1347" width="25" height="18" rx="3"/>
<rect x="2447" y="1137" width="26" height="18" rx="3"/>
<rect x="2451" y="512" width="33" height="18" rx="3"/>
</g>
<text class="sh" x="1562" y="973">1</text>
<text class="sh" x="1731" y="1013">187</text>
<text class="sh" x="1955.500" y="1356">1</text>
<text class="sh" x="2460" y="1146">90</text>
<text class="sh" x="2467.500" y="521">187</text>
<path d="M2266 467L2272 465L2278 467L2284 465L2290 467V478Q2290 484 2278 490Q2266 484 2266 478Z" fill="#5a6ac8"/>
<path d="M2266 467L2272 465L2278 467L2284 465L2290 467V472H2266Z" fill="#c0504a"/>
<text x="2278" y="479" font-size="13" font-weight="bold" fill="#fff" text-anchor="middle">10</text>
<path d="M2083 698L2091 696L2099 698L2107 696L2115 698V709Q2115 716 2099 722Q2083 716 2083 709Z" fill="#5a6ac8"/>
<path d="M2083 698L2091 696L2099 698L2107 696L2115 698V703H2083Z" fill="#c0504a"/>
<text x="2099" y="710" font-size="13" font-weight="bold" fill="#fff" text-anchor="middle">405</text>

<!-- route -->
<polyline fill="none" stroke="#5e5e5e" stroke-width="5.500" stroke-linejoin="miter" points="2381,625 2336,655 2319,630 2278,654 2238,593 2209,614 2193,588 2178,600 2141,608 2072,505 2055,490 1976,529 1880,580 1812,623 1782,635 1779,594 1765,562 1737,580 1704,607 1682,582 1671,572 1602,615 1556,641 1530,661 1368,770 1417,830 1425,858 1408,871 1434,894 1392,924 1370,943 1357,968 1376,996 1457,943 1522,1021 1486,1042 1511,1087 1506,1095 1532,1104 1554,1122 1625,1076 1608,1068 1612,1057 1629,1049 1644,1019 1638,1017 1661,972 1646,941 1709,909 1756,979 1764,955 1747,963 1791,1036 1804,1063 1789,1100 1844,1150 1956,1080 1955,1053 1970,1038 2032,1032 2077,1015 2102,1000 2077,977 2034,917 2051,909 2034,877 2046,845 2046,830 2178,722 2192,752 2216,789 2207,815 2235,832 2252,845 2209,922 2252,858 2278,820 2285,830 2336,729 2379,785 2407,762 2358,700 2398,635"/>
<path d="M2164 612L2184 604" stroke="#5e5e5e" stroke-width="5" fill="none"/>
<path d="M1750 962L1768 952" stroke="#5e5e5e" stroke-width="5" fill="none"/>

<!-- pins -->
<g fill="#fff" stroke="#101828" stroke-width="3">
<use href="#pin" x="2071" y="488"/>
<use href="#pin" x="1937" y="580"/>
<use href="#pin" x="1542" y="647"/>
<use href="#pin" x="1387" y="728"/>
<use href="#pin" x="1434" y="841"/>
<use href="#pin" x="1357" y="949"/>
<use href="#pin" x="1497" y="1013"/>
<use href="#pin" x="1533" y="1087"/>
<use href="#pin" x="1614" y="1039"/>
<use href="#pin" x="1657" y="917"/>
<use href="#pin" x="1760" y="932"/>
<use href="#pin" x="1790" y="1082"/>
<use href="#pin" x="1955" y="1035"/>
<use href="#pin" x="2078" y="997"/>
<use href="#pin" x="2028" y="860"/>
<use href="#pin" x="2192" y="733"/>
<use href="#pin" x="2235" y="820"/>
<use href="#pin" x="2197" y="934"/>
<use href="#pin" x="2285" y="810"/>
<use href="#pin" x="2407" y="745"/>
</g>
<use href="#pin" x="1671" y="555" fill="#101828" stroke="#101828" stroke-width="3"/>
<use href="#pin" x="2178" y="588" fill="#d9b344" stroke="#d9b344" stroke-width="1.500"/>
<text class="pn" x="2178" y="588">1</text>
<text class="pn" x="2071" y="488">2</text>
<text class="pn" x="1937" y="580">3</text>
<text class="pn" x="1671" y="555" style="fill:#fff">4</text>
<text class="pn" x="1542" y="647">5</text>
<text class="pn" x="1387" y="728">6</text>
<text class="pn" x="1434" y="841">7</text>
<text class="pn" x="1357" y="949">8</text>
<text class="pn" x="1497" y="1013">9</text>
<text class="pn" x="1533" y="1087">10</text>
<text class="pn" x="1614" y="1039">11</text>
<text class="pn" x="1657" y="917">12</text>
<text class="pn" x="1760" y="932">13</text>
<text class="pn" x="1790" y="1082">14</text>
<text class="pn" x="1955" y="1035">15</text>
<text class="pn" x="2078" y="997">16</text>
<text class="pn" x="2028" y="860">17</text>
<text class="pn" x="2192" y="733">18</text>
<text class="pn" x="2235" y="820">19</text>
<text class="pn" x="2197" y="934">20</text>
<text class="pn" x="2285" y="810">21</text>
<text class="pn" x="2407" y="745">22</text>

<!-- Culver City + flag -->
<text x="2359" y="617" font-size="24" fill="#1a1a1a" stroke="#ece9e5" stroke-width="2.500" paint-order="stroke" textLength="113" lengthAdjust="spacingAndGlyphs">Culver City</text>
<circle cx="2398" cy="620" r="18.500" fill="#101828"/>
<path d="M2392 631V611C2396 609 2399 613 2405 611V620C2399 622 2396 618 2392 620" fill="#fff" stroke="#fff" stroke-width="1.500"/>

<!-- mapbox mark -->
<circle cx="762" cy="1399" r="12.500" fill="#e9eef3" stroke="#7b8aa0" stroke-width="2.500"/>
<path d="M755 1402Q761 1392 769 1402Z" fill="#66768f"/>
<text x="778" y="1403" font-size="19" font-weight="bold" fill="#8b98a8" stroke="#dbe9f5" stroke-width="1.500" paint-order="stroke" textLength="85" lengthAdjust="spacingAndGlyphs">mapbox</text>

<!-- attribution -->
<rect x="2151" y="1395" width="366" height="27" fill="#fff" opacity=".5"/>
<text x="2156" y="1409" font-size="16" fill="#333" textLength="213" lengthAdjust="spacingAndGlyphs">© Mapbox © OpenStreetMap</text>
<text x="2377" y="1409" font-size="16" font-weight="bold" fill="#333" textLength="63" lengthAdjust="spacingAndGlyphs">Improve</text>
</g>

<!-- chat bubble -->
<circle cx="2477" cy="1387" r="40" fill="#111827"/>
<path d="M2477 1366C2488 1366 2496 1374 2496 1385C2496 1396 2488 1403 2477 1403L2470 1403L2465 1407L2464 1400C2459 1397 2458 1391 2458 1385C2458 1374 2466 1366 2477 1366Z" fill="#fff"/>
<path d="M2476 1394Q2482 1398 2488 1394Z" fill="#111827"/>

<!-- panel resize handle -->
<rect x="730.500" y="801" width="15" height="20" rx="4" fill="#e5e7eb"/>
<g fill="#475467"><circle cx="736" cy="806" r="1.300"/><circle cx="740.500" cy="806" r="1.300"/><circle cx="736" cy="811" r="1.300"/><circle cx="740.500" cy="811" r="1.300"/><circle cx="736" cy="816" r="1.300"/><circle cx="740.500" cy="816" r="1.300"/></g>

<!-- MODAL -->
<rect x="759" y="221" width="484" height="1180" rx="13" fill="#fff"/>
<text x="792" y="273" font-size="26" font-weight="bold" fill="#0c111d" textLength="102" lengthAdjust="spacingAndGlyphs">Edit stop</text>
<path d="M1180 264L1199 283M1199 264L1180 283" stroke="#111" stroke-width="2.800" fill="none"/>

<text class="l" x="792" y="340" textLength="62" lengthAdjust="spacingAndGlyphs">Address</text>
<rect class="box" x="791" y="363" width="420" height="53" rx="6"/>
<text x="809" y="390" font-size="21" fill="#101828" textLength="351" lengthAdjust="spacingAndGlyphs">3101 Veteran Ave, Los Angeles, CA</text>
<path d="M1169 381L1187 399M1187 381L1169 399" stroke="#5a5a5a" stroke-width="2.400" fill="none"/>
<text class="l" x="792" y="434" textLength="345" lengthAdjust="spacingAndGlyphs">Drag&amp;drop pin on the map to change address</text>

<text class="l" x="792" y="480" textLength="101" lengthAdjust="spacingAndGlyphs">Color on map</text>
<rect class="box" x="791" y="503" width="420" height="52" rx="6"/>
<text x="809" y="530" font-size="20" fill="#101828" textLength="47" lengthAdjust="spacingAndGlyphs">None</text>
<path d="M1168 525L1177 534L1186 525" stroke="#5a5a5a" stroke-width="2.200" fill="none"/>

<text class="l" x="792" y="590" textLength="111" lengthAdjust="spacingAndGlyphs">Select position</text>
<rect class="box" x="791" y="613" width="420" height="52" rx="6"/>
<text x="809" y="640" font-size="21" fill="#101828">2</text>
<path d="M1169 630L1187 648M1187 630L1169 648" stroke="#5a5a5a" stroke-width="2.400" fill="none"/>

<text class="l" x="792" y="700" textLength="135" lengthAdjust="spacingAndGlyphs">Service Time, m:s</text>
<rect class="box" x="791" y="724" width="420" height="46" rx="6"/>
<text class="v" x="808" y="748" textLength="47" lengthAdjust="spacingAndGlyphs">01:00</text>
<path d="M1177 740L1191 754M1191 740L1177 754" stroke="#777" stroke-width="1.400" fill="none"/>

<text class="l" x="792" y="805" textLength="91" lengthAdjust="spacingAndGlyphs">Arrival From</text>
<text class="l" x="1007" y="805" textLength="72" lengthAdjust="spacingAndGlyphs">Arrival To</text>
<rect class="box" x="791" y="828" width="204" height="47" rx="6"/>
<text class="v" x="808" y="852" textLength="85" lengthAdjust="spacingAndGlyphs">07:00 AM</text>
<path d="M962 845L976 859M976 845L962 859" stroke="#777" stroke-width="1.400" fill="none"/>
<rect class="box" x="1007" y="828" width="204" height="47" rx="6"/>
<text x="1023" y="852" font-size="20" fill="#8b93a5" textLength="86" lengthAdjust="spacingAndGlyphs">hh:mm aa</text>
<g fill="none" stroke="#8b93a5" stroke-width="1.500"><circle cx="1184" cy="852" r="9"/><path d="M1184 846V853H1190"/></g>

<text class="l" x="792" y="909" textLength="108" lengthAdjust="spacingAndGlyphs">Arrival Priority</text>
<rect class="box" x="791" y="932" width="420" height="50" rx="6"/>
<rect x="934" y="938" width="134" height="39" rx="6" fill="#fff" stroke="#1d2433" stroke-width="2"/>
<text class="v c" x="864" y="958.500" textLength="64" lengthAdjust="spacingAndGlyphs">Earliest</text>
<text class="v c" x="1001" y="958.500" textLength="41" lengthAdjust="spacingAndGlyphs">Auto</text>
<text class="v c" x="1138" y="958.500" textLength="53" lengthAdjust="spacingAndGlyphs">Latest</text>

<text class="l" x="792" y="1016" textLength="130" lengthAdjust="spacingAndGlyphs">Curbside parking</text>
<rect class="box" x="791" y="1040" width="420" height="50" rx="6"/>
<rect x="934" y="1045" width="134" height="39" rx="6" fill="#fff" stroke="#1d2433" stroke-width="2"/>
<text class="v c" x="864" y="1066" textLength="34" lengthAdjust="spacingAndGlyphs">Left</text>
<text class="v c" x="1001" y="1066" textLength="34" lengthAdjust="spacingAndGlyphs">Any</text>
<text class="v c" x="1138" y="1066" textLength="45" lengthAdjust="spacingAndGlyphs">Right</text>

<text class="l" x="792" y="1124" textLength="44" lengthAdjust="spacingAndGlyphs">Notes</text>
<rect class="box" x="791" y="1147" width="420" height="103" rx="6"/>
<text class="v" x="809" y="1173" textLength="192" lengthAdjust="spacingAndGlyphs">Drop at the front door</text>
<path d="M1199 1248L1209 1240M1204 1248L1209 1244" stroke="#888" stroke-width="1" fill="none"/>

<rect class="box" x="791" y="1315" width="206" height="53" rx="5"/>
<text class="c" x="894" y="1342" font-size="20" font-weight="bold" fill="#c8443a" textLength="57" lengthAdjust="spacingAndGlyphs">Delete</text>
<rect x="1007" y="1315" width="204" height="53" rx="5" fill="#8c8c8c"/>
<text class="c" x="1109" y="1342" font-size="20" font-weight="bold" fill="#f0f0f0" textLength="43" lengthAdjust="spacingAndGlyphs">Save</text>
</svg>
</body>
</html>
